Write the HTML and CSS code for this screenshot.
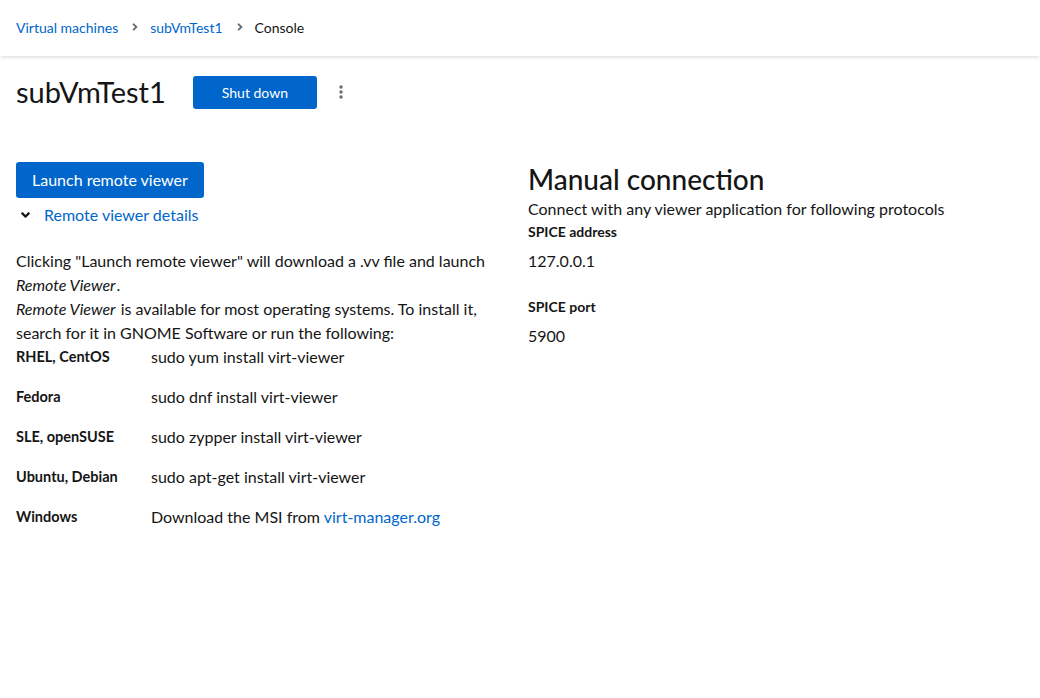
FILE: index.html
```html
<!DOCTYPE html>
<html lang="en">
<head>
<meta charset="utf-8">
<title>subVmTest1 - Console</title>
<link rel="stylesheet" href="styles.css">
</head>
<body>
<header class="page-header">
  <nav class="breadcrumb">
    <a class="crumb-link" href="#">Virtual machines</a>
    <span class="crumb-sep"><svg viewBox="0 0 256 512" width="8" height="12"><path fill="currentColor" d="M224.3 273l-136 136c-9.4 9.4-24.6 9.4-33.9 0l-22.6-22.6c-9.4-9.4-9.4-24.6 0-33.9l96.4-96.4-96.4-96.4c-9.4-9.4-9.4-24.6 0-33.9L54.3 103c9.4-9.4 24.6-9.4 33.9 0l136 136c9.5 9.4 9.5 24.6.1 34z"/></svg></span>
    <a class="crumb-link" href="#">subVmTest1</a>
    <span class="crumb-sep"><svg viewBox="0 0 256 512" width="8" height="12"><path fill="currentColor" d="M224.3 273l-136 136c-9.4 9.4-24.6 9.4-33.9 0l-22.6-22.6c-9.4-9.4-9.4-24.6 0-33.9l96.4-96.4-96.4-96.4c-9.4-9.4-9.4-24.6 0-33.9L54.3 103c9.4-9.4 24.6-9.4 33.9 0l136 136c9.5 9.4 9.5 24.6.1 34z"/></svg></span>
    <span class="crumb-current">Console</span>
  </nav>
</header>

<section class="title-bar">
  <h1 class="vm-name">subVmTest1</h1>
  <button class="btn btn-primary btn-sm">Shut down</button>
  <button class="kebab" aria-label="Actions">
    <svg viewBox="0 0 4 14" width="4" height="14"><circle cx="2" cy="2" r="1.7" fill="currentColor"/><circle cx="2" cy="7" r="1.7" fill="currentColor"/><circle cx="2" cy="12" r="1.7" fill="currentColor"/></svg>
  </button>
</section>

<main class="console">
  <div class="col-left">
    <button class="btn btn-primary">Launch remote viewer</button>
    <div class="expand-toggle">
      <span class="toggle-icon"><svg viewBox="0 0 320 512" width="11" height="14"><path fill="currentColor" d="M143 352.3L7 216.3c-9.4-9.4-9.4-24.6 0-33.9l22.6-22.6c9.4-9.4 24.6-9.4 33.9 0l96.4 96.4 96.4-96.4c9.4-9.4 24.6-9.4 33.9 0l22.6 22.6c9.4 9.4 9.4 24.6 0 33.9l-136 136c-9.2 9.4-24.4 9.4-33.8 0z"/></svg></span>
      <span class="toggle-text">Remote viewer details</span>
    </div>
    <div class="details">
      <p>Clicking "Launch remote viewer" will download a .vv file and launch <i>Remote Viewer</i>.</p>
      <p><i>Remote Viewer</i> is available for most operating systems. To install it, search for it in GNOME Software or run the following:</p>
      <dl class="install-list">
        <dt>RHEL, CentOS</dt><dd>sudo yum install virt-viewer</dd>
        <dt>Fedora</dt><dd>sudo dnf install virt-viewer</dd>
        <dt>SLE, openSUSE</dt><dd>sudo zypper install virt-viewer</dd>
        <dt>Ubuntu, Debian</dt><dd>sudo apt-get install virt-viewer</dd>
        <dt>Windows</dt><dd>Download the MSI from <a href="#">virt-manager.org</a></dd>
      </dl>
    </div>
  </div>
  <div class="col-right">
    <h2 class="manual-title">Manual connection</h2>
    <p class="manual-desc">Connect with any viewer application for following protocols</p>
    <dl class="conn-list">
      <dt>SPICE address</dt><dd>127.0.0.1</dd>
      <dt>SPICE port</dt><dd>5900</dd>
    </dl>
  </div>
</main>
</body>
</html>
```

FILE: styles.css
```css
* { box-sizing: border-box; }
html, body { margin: 0; padding: 0; background: #fff; }
body {
  font-family: Lato, "Noto Sans", sans-serif;
  color: #151515;
  font-size: 16px;
  line-height: 24px;
}
a { color: #0066cc; text-decoration: none; }
i { padding-right: 1px; }

.page-header {
  height: 56px;
  padding: 0 16px 2px;
  display: flex;
  align-items: center;
  background: #fff;
  box-shadow: 0 2px 4px -1px rgba(3,3,3,0.16);
  position: relative;
}
.breadcrumb { display: flex; align-items: center; font-size: 14px; line-height: 21px; }
.crumb-link { color: #0066cc; }
.crumb-sep { color: #6a6e73; display: inline-flex; margin: 0 11px 0 13px; }
.crumb-current { color: #151515; }

.title-bar {
  display: flex;
  align-items: center;
  padding: 19px 16px 0 16px;
}
.vm-name {
  margin: 0 27px 0 0;
  font-size: 29px;
  font-weight: 400;
  line-height: 34px;
}
.btn {
  font-family: inherit;
  border: 0;
  border-radius: 3px;
  cursor: pointer;
}
.btn-primary {
  background: #0066cc;
  color: #fff;
  font-size: 16px;
  line-height: 24px;
  padding: 6px 16px;
}
.btn-sm { font-size: 14px; line-height: 21px; padding: 6px 29px; }
.kebab {
  border: 0;
  background: none;
  color: #6a6e73;
  margin-left: 16px;
  padding: 4px 6px;
  display: inline-flex;
}

.console {
  display: grid;
  grid-template-columns: 496px 1fr;
  column-gap: 16px;
  padding: 53px 16px 0;
}
.col-left .btn-primary { display: block; }
.expand-toggle {
  display: flex;
  align-items: center;
  margin-top: 5px;
  color: #0066cc;
}
.toggle-icon { color: #151515; display: inline-flex; width: 28px; padding-left: 4px; }
.details { margin-top: 22px; }
.details p { margin: 0; }
.install-list {
  display: grid;
  grid-template-columns: 135px 1fr;
  row-gap: 16px;
  margin: 0;
}
.install-list dt { font-weight: 700; font-size: 14.5px; }
.install-list dd { margin: 0; }

.manual-title {
  margin: 0;
  font-size: 28px;
  font-weight: 500;
  line-height: 35px;
}
.manual-desc { margin: 0; }
.conn-list { margin: 0; }
.conn-list dt { font-weight: 700; font-size: 14px; line-height: 21px; }
.conn-list dd { margin: 0 0 23px; padding-top: 7px; }
```
